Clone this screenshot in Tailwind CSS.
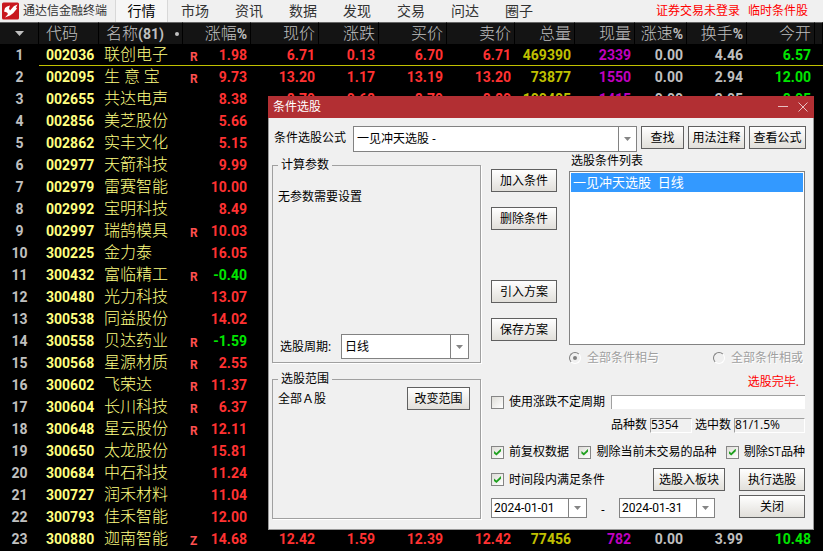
<!DOCTYPE html>
<html lang="zh-CN">
<head>
    <meta charset="UTF-8">
    <meta name="viewport" content="width=device-width, initial-scale=1.0">
    <title>通达信金融终端</title>
    <script src="https://cdn.jsdelivr.net/npm/@tailwindcss/browser@4"></script>
</head>
<body class="relative min-h-screen overflow-hidden bg-black font-['Open_Sans','Noto_Sans_CJK_SC',sans-serif] text-xs leading-4 text-black">

    <!-- Menu principal -->
    <header class="flex h-[22px] items-center bg-[#f0f0f0] whitespace-nowrap">
        <div class="flex w-[115px] items-center gap-1 pl-0.5">
            <svg class="h-[18px] w-[17px] shrink-0" viewBox="0 0 17 18">
                <rect width="17" height="17" y="0.5" rx="1.500" fill="#c8171e"/>
                <path d="M2 9.500 L3 6 Q4.500 4 8 3.500 L7 6.500 L8 8.500 L12 4 L15.500 2.500 L14 5.500 L15 6.500 Q12 11 8 13.500 L3 15.500 L6 12 L5 10.500Z" fill="#fff"/>
            </svg>
            <span class="text-[#333]">通达信金融终端</span>
        </div>
        <nav class="flex h-full text-sm text-[#333]">
            <a href="#" class="flex h-full w-[53px] items-center justify-center border-x border-[#d8d8d8] bg-[#f6f6f6] text-black">行情</a>
            <a href="#" class="flex w-[54px] items-center justify-center">市场</a>
            <a href="#" class="flex w-[54px] items-center justify-center">资讯</a>
            <a href="#" class="flex w-[54px] items-center justify-center">数据</a>
            <a href="#" class="flex w-[54px] items-center justify-center">发现</a>
            <a href="#" class="flex w-[54px] items-center justify-center">交易</a>
            <a href="#" class="flex w-[54px] items-center justify-center">问达</a>
            <a href="#" class="flex w-[54px] items-center justify-center">圈子</a>
        </nav>
        <div class="ml-auto flex gap-2 pr-[15px] text-[#f00]">
            <a href="#">证券交易未登录</a>
            <a href="#">临时条件股</a>
        </div>
    </header>

    <!-- Quotes -->
    <table class="w-full table-fixed border-separate border-spacing-0 font-[Roboto,'Noto_Sans_CJK_SC',sans-serif] text-sm leading-5 font-bold whitespace-nowrap">
        <colgroup>
            <col class="w-[39px]"><col class="w-[60px]"><col class="w-[84px]"><col class="w-[68px]">
            <col class="w-[68px]"><col class="w-[60px]"><col class="w-[68px]"><col class="w-[68px]">
            <col class="w-[60px]"><col class="w-[60px]"><col class="w-[52px]"><col class="w-[60px]">
            <col class="w-[68px]"><col>
        </colgroup>
        <thead>
            <tr class="h-[22px] text-right text-[#c0c0c0] *:border-t *:border-r *:border-t-[#666] *:border-r-black *:bg-[#141414] *:p-0 *:pr-[3px]">
                <th><svg class="ml-[15px] h-[5px] w-[9px]" viewBox="0 0 9 5"><path d="M0 0h9L4.500 5z" fill="#c0c0c0"/></svg></th>
                <th class="text-left"><span class="ml-[7px] text-base leading-5 font-light">代码</span></th>
                <th><div class="flex items-center justify-between pl-[7px]"><div><span class="text-base leading-5 font-light">名称</span>(81)</div><span class="h-1 w-1 rounded-full bg-[#c0c0c0]"></span></div></th>
                <th><span class="text-base leading-5 font-light">涨幅</span>%</th>
                <th><span class="text-base leading-5 font-light">现价</span></th>
                <th><span class="text-base leading-5 font-light">涨跌</span></th>
                <th><span class="text-base leading-5 font-light">买价</span></th>
                <th><span class="text-base leading-5 font-light">卖价</span></th>
                <th><span class="text-base leading-5 font-light">总量</span></th>
                <th><span class="text-base leading-5 font-light">现量</span></th>
                <th><span class="text-base leading-5 font-light">涨速</span>%</th>
                <th><span class="text-base leading-5 font-light">换手</span>%</th>
                <th><span class="text-base leading-5 font-light">今开</span></th>
                <th></th>
            </tr>
        </thead>
        <tbody id="quotes" class="text-right text-[#ff3232]"></tbody>
    </table>

    <!-- Stock filter dialog -->
    <section role="dialog" aria-labelledby="dialog-title" class="absolute top-24 left-[268px] w-[546px] border-r border-b border-l border-[#999] bg-[#f0f0f0] whitespace-nowrap">
        <div class="-mx-px flex h-[22px] items-center bg-[#b22f33] pr-1.5 pl-[5px] text-white">
            <h1 id="dialog-title">条件选股</h1>
            <button type="button" aria-label="最小化" class="ml-auto"><svg class="h-2.5 w-2.5" viewBox="0 0 10 10"><path d="M0 4.500h10" stroke="#e8c0c2" fill="none"/></svg></button>
            <button type="button" aria-label="关闭窗口" class="ml-2.5"><svg class="h-2.5 w-2.5" viewBox="0 0 10 10"><path d="M.5.5l9 9M9.500.5l-9 9" stroke="#e8c0c2" fill="none"/></svg></button>
        </div>

        <div class="flex items-start pt-2 pr-[7px] pl-[5px]">
            <label for="formula" class="w-[79px] pt-1">条件选股公式</label>
            <div class="relative mr-1 h-[26px] flex-1">
                <select id="formula" class="h-full w-full appearance-none border border-[#828282] bg-white pl-[3px]"><option>一见冲天选股 -</option></select>
                <span class="pointer-events-none absolute inset-y-0 right-0 flex w-[19px] items-center justify-center border border-[#828282]"><svg class="h-1 w-[7px]" viewBox="0 0 7 4"><path d="M0 0h7L3.500 4z" fill="#858585"/></svg></span>
            </div>
            <div class="flex gap-1">
                <button type="button" class="h-[23px] w-[43px] border border-[#606060] bg-linear-to-b from-white to-[#e1dfda]">查找</button>
                <button type="button" class="h-[23px] w-[57px] border border-[#606060] bg-linear-to-b from-white to-[#e1dfda]">用法注释</button>
                <button type="button" class="h-[23px] w-[57px] border border-[#606060] bg-linear-to-b from-white to-[#e1dfda]">查看公式</button>
            </div>
        </div>

        <div class="flex gap-[10px] pt-px pr-2 pb-[10px] pl-[3px]">
            <div class="flex w-[209px] flex-col gap-2 pt-1">
                <fieldset class="border border-[#a0a0a0] px-[5px] pb-[3px] shadow-[1px_1px_0_white]">
                    <legend class="px-[3px]">计算参数</legend>
                    <p class="pt-4">无参数需要设置</p>
                    <div class="mt-[129px] flex items-center pr-1.5 pl-0.5">
                        <label for="period" class="flex-1">选股周期:</label>
                        <div class="relative h-[25px] w-32">
                            <select id="period" class="h-full w-full appearance-none border border-[#828282] bg-white pl-[3px]"><option>日线</option></select>
                            <span class="pointer-events-none absolute inset-y-0 right-0 flex w-[19px] items-center justify-center border border-[#828282]"><svg class="h-1 w-[7px]" viewBox="0 0 7 4"><path d="M0 0h7L3.500 4z" fill="#858585"/></svg></span>
                        </div>
                    </div>
                </fieldset>
                <fieldset class="h-[148px] border border-[#a0a0a0] px-[5px] shadow-[1px_1px_0_white]">
                    <legend class="px-[3px]">选股范围</legend>
                    <div class="flex items-start justify-between pr-[5px]">
                        <span class="pt-1">全部Ａ股</span>
                        <button type="button" class="h-[23px] w-[63px] border border-[#606060] bg-linear-to-b from-white to-[#e1dfda]">改变范围</button>
                    </div>
                </fieldset>
            </div>

            <div class="min-w-0 flex-1">
                <div class="flex gap-3">
                    <div class="flex w-[66px] flex-col gap-[15px] pt-4 *:h-[23px] *:border *:border-[#606060] *:bg-linear-to-b *:from-white *:to-[#e1dfda]">
                        <button type="button">加入条件</button>
                        <button type="button">删除条件</button>
                        <button type="button" class="mt-[35px]">引入方案</button>
                        <button type="button">保存方案</button>
                    </div>
                    <div class="flex-1">
                        <h2 id="list-title" class="pl-0.5">选股条件列表</h2>
                        <ul role="listbox" aria-labelledby="list-title" class="mt-0.5 h-[174px] border border-[#828282] bg-white p-px">
                            <li role="option" aria-selected="true" class="h-[19px] bg-[#3399ff] pl-0.5 text-[13px] leading-[19px] text-white">一见冲天选股&nbsp; 日线</li>
                        </ul>
                        <div class="mt-[5px] flex justify-between pr-0.5 text-[#a0a0a0] text-shadow-[1px_1px_0_white]">
                            <label class="flex items-center gap-1.5"><input type="radio" name="mode" checked disabled class="grid h-3 w-3 appearance-none place-items-center rounded-full border border-t-[#808080] border-r-white border-b-white border-l-[#808080] before:h-1 before:w-1 before:rounded-full before:bg-[#808080]">全部条件相与</label>
                            <label class="flex items-center gap-1.5"><input type="radio" name="mode" disabled class="h-3 w-3 appearance-none rounded-full border border-t-[#808080] border-r-white border-b-white border-l-[#808080]">全部条件相或</label>
                        </div>
                    </div>
                </div>
                <p class="mt-2 pr-1.5 text-right text-[#f00]">选股完毕.</p>
                <div class="mt-1 flex items-center justify-between">
                    <label class="flex items-center gap-[5px]"><input type="checkbox" class="grid h-[13px] w-[13px] appearance-none place-items-center border border-[#858585] bg-linear-to-br from-[#deddd8] to-white checked:before:h-[7px] checked:before:w-[7px] checked:before:bg-[#21a121] checked:before:[clip-path:polygon(0_35%,35%_65%,100%_0,100%_40%,35%_100%,0_70%)]">使用涨跌不定周期</label>
                    <input type="text" aria-label="周期" class="h-3.5 w-[194px] border-t border-l border-[#a0a0a0] bg-white">
                </div>
                <div class="mt-[7px] flex items-center justify-end gap-[3px]">
                    <label for="total">品种数</label>
                    <input id="total" type="text" readonly value="5354" class="h-[15px] w-[42px] border border-t-[#a0a0a0] border-r-white border-b-white border-l-[#a0a0a0]">
                    <label for="selected">选中数</label>
                    <input id="selected" type="text" readonly value="81/1.5%" class="h-[15px] w-[71px] border border-t-[#a0a0a0] border-r-white border-b-white border-l-[#a0a0a0]">
                </div>
                <div class="mt-[11px] flex justify-between">
                    <label class="flex items-center gap-[5px]"><input type="checkbox" checked class="grid h-[13px] w-[13px] appearance-none place-items-center border border-[#858585] bg-linear-to-br from-[#deddd8] to-white checked:before:h-[7px] checked:before:w-[7px] checked:before:bg-[#21a121] checked:before:[clip-path:polygon(0_35%,35%_65%,100%_0,100%_40%,35%_100%,0_70%)]">前复权数据</label>
                    <label class="flex items-center gap-[5px]"><input type="checkbox" checked class="grid h-[13px] w-[13px] appearance-none place-items-center border border-[#858585] bg-linear-to-br from-[#deddd8] to-white checked:before:h-[7px] checked:before:w-[7px] checked:before:bg-[#21a121] checked:before:[clip-path:polygon(0_35%,35%_65%,100%_0,100%_40%,35%_100%,0_70%)]">剔除当前未交易的品种</label>
                    <label class="flex items-center gap-[5px]"><input type="checkbox" checked class="grid h-[13px] w-[13px] appearance-none place-items-center border border-[#858585] bg-linear-to-br from-[#deddd8] to-white checked:before:h-[7px] checked:before:w-[7px] checked:before:bg-[#21a121] checked:before:[clip-path:polygon(0_35%,35%_65%,100%_0,100%_40%,35%_100%,0_70%)]">剔除ST品种</label>
                </div>
                <div class="mt-2 flex items-center">
                    <label class="flex flex-1 items-center gap-[5px]"><input type="checkbox" checked class="grid h-[13px] w-[13px] appearance-none place-items-center border border-[#858585] bg-linear-to-br from-[#deddd8] to-white checked:before:h-[7px] checked:before:w-[7px] checked:before:bg-[#21a121] checked:before:[clip-path:polygon(0_35%,35%_65%,100%_0,100%_40%,35%_100%,0_70%)]">时间段内满足条件</label>
                    <button type="button" class="mr-3.5 h-[23px] w-[72px] border border-[#606060] bg-linear-to-b from-white to-[#e1dfda]">选股入板块</button>
                    <button type="button" class="h-[23px] w-[66px] border border-[#606060] bg-linear-to-b from-white to-[#e1dfda]">执行选股</button>
                </div>
                <div class="mt-1 flex items-end font-[Roboto,'Noto_Sans_CJK_SC',sans-serif]">
                    <div class="relative h-5 w-24">
                        <select aria-label="开始日期" class="h-full w-full appearance-none border border-[#828282] bg-white pl-0.5"><option>2024-01-01</option></select>
                        <span class="pointer-events-none absolute inset-y-0 right-0 flex w-[19px] items-center justify-center border border-[#828282]"><svg class="h-1 w-[7px]" viewBox="0 0 7 4"><path d="M0 0h7L3.500 4z" fill="#858585"/></svg></span>
                    </div>
                    <span class="w-8 text-center">-</span>
                    <div class="relative h-5 w-24">
                        <select aria-label="结束日期" class="h-full w-full appearance-none border border-[#828282] bg-white pl-0.5"><option>2024-01-31</option></select>
                        <span class="pointer-events-none absolute inset-y-0 right-0 flex w-[19px] items-center justify-center border border-[#828282]"><svg class="h-1 w-[7px]" viewBox="0 0 7 4"><path d="M0 0h7L3.500 4z" fill="#858585"/></svg></span>
                    </div>
                    <button type="button" class="ml-auto h-[23px] w-[66px] border border-[#606060] bg-linear-to-b from-white to-[#e1dfda]">关闭</button>
                </div>
            </div>
        </div>
    </section>

    <script>
        // 代码, 名称, 标记, 涨幅, 现价 ... 今开
        const quotes = [
            ['002036', '联创电子', 'R', '1.98', '6.71', '0.13', '6.70', '6.71', '469390', '2339', '0.00', '4.46', '6.57'],
            ['002095', '生 意 宝', 'R', '9.73', '13.20', '1.17', '13.19', '13.20', '73877', '1550', '0.00', '2.94', '12.00'],
            ['002655', '共达电声', '', '8.38', '8.79', '0.68', '8.79', '8.80', '100405', '1415', '0.00', '3.05', '8.05'],
            ['002856', '美芝股份', '', '5.66'],
            ['002862', '实丰文化', '', '5.15'],
            ['002977', '天箭科技', '', '9.99'],
            ['002979', '雷赛智能', '', '10.00'],
            ['002992', '宝明科技', '', '8.49'],
            ['002997', '瑞鹄模具', 'R', '10.03'],
            ['300225', '金力泰', '', '16.05'],
            ['300432', '富临精工', 'R', '-0.40'],
            ['300480', '光力科技', '', '13.07'],
            ['300538', '同益股份', '', '14.02'],
            ['300558', '贝达药业', 'R', '-1.59'],
            ['300568', '星源材质', 'R', '2.55'],
            ['300602', '飞荣达', 'R', '11.37'],
            ['300604', '长川科技', 'R', '6.37'],
            ['300648', '星云股份', 'R', '12.11'],
            ['300650', '太龙股份', '', '15.81'],
            ['300684', '中石科技', '', '11.24'],
            ['300727', '润禾材料', '', '11.04'],
            ['300793', '佳禾智能', '', '12.00'],
            ['300880', '迦南智能', 'Z', '14.68', '12.42', '1.59', '12.39', '12.42', '77456', '782', '0.00', '3.99', '10.48']
        ];
        const colors = ['', '', '', '', 'text-[#c0c000]', 'text-[#c000c0]', 'text-[#c0c0c0]', 'text-[#c0c0c0]', 'text-[#00e600]'];

        document.getElementById('quotes').innerHTML = quotes.map(([code, name, mark, change, ...rest], i) => {
            const line = i === 0 ? 'border-b border-b-[#c0c000]' : '';
            const cells = colors.map((color, c) => `<td class="p-0 pr-1 ${line} ${color}">${rest[c] || ''}</td>`).join('');
            return `<tr class="h-[22px]">
                <td class="p-0 text-center text-[#c0c0c0]">${i + 1}</td>
                <td class="p-0 pl-[7px] text-left text-[#ffff80] ${line}">${code}</td>
                <td class="p-0 pl-[5px] text-left text-base leading-5 font-light text-[#ffff80] ${line}">${name}</td>
                <td class="p-0 pr-1 pl-[7px] ${line}"><div class="flex items-end justify-between"><span class="text-xs leading-4 text-[#ff5050]">${mark}</span><span class="${change[0] === '-' ? 'text-[#00e600]' : ''}">${change}</span></div></td>
                ${cells}<td class="p-0 ${line}"></td>
            </tr>`;
        }).join('');
    </script>
</body>
</html>
